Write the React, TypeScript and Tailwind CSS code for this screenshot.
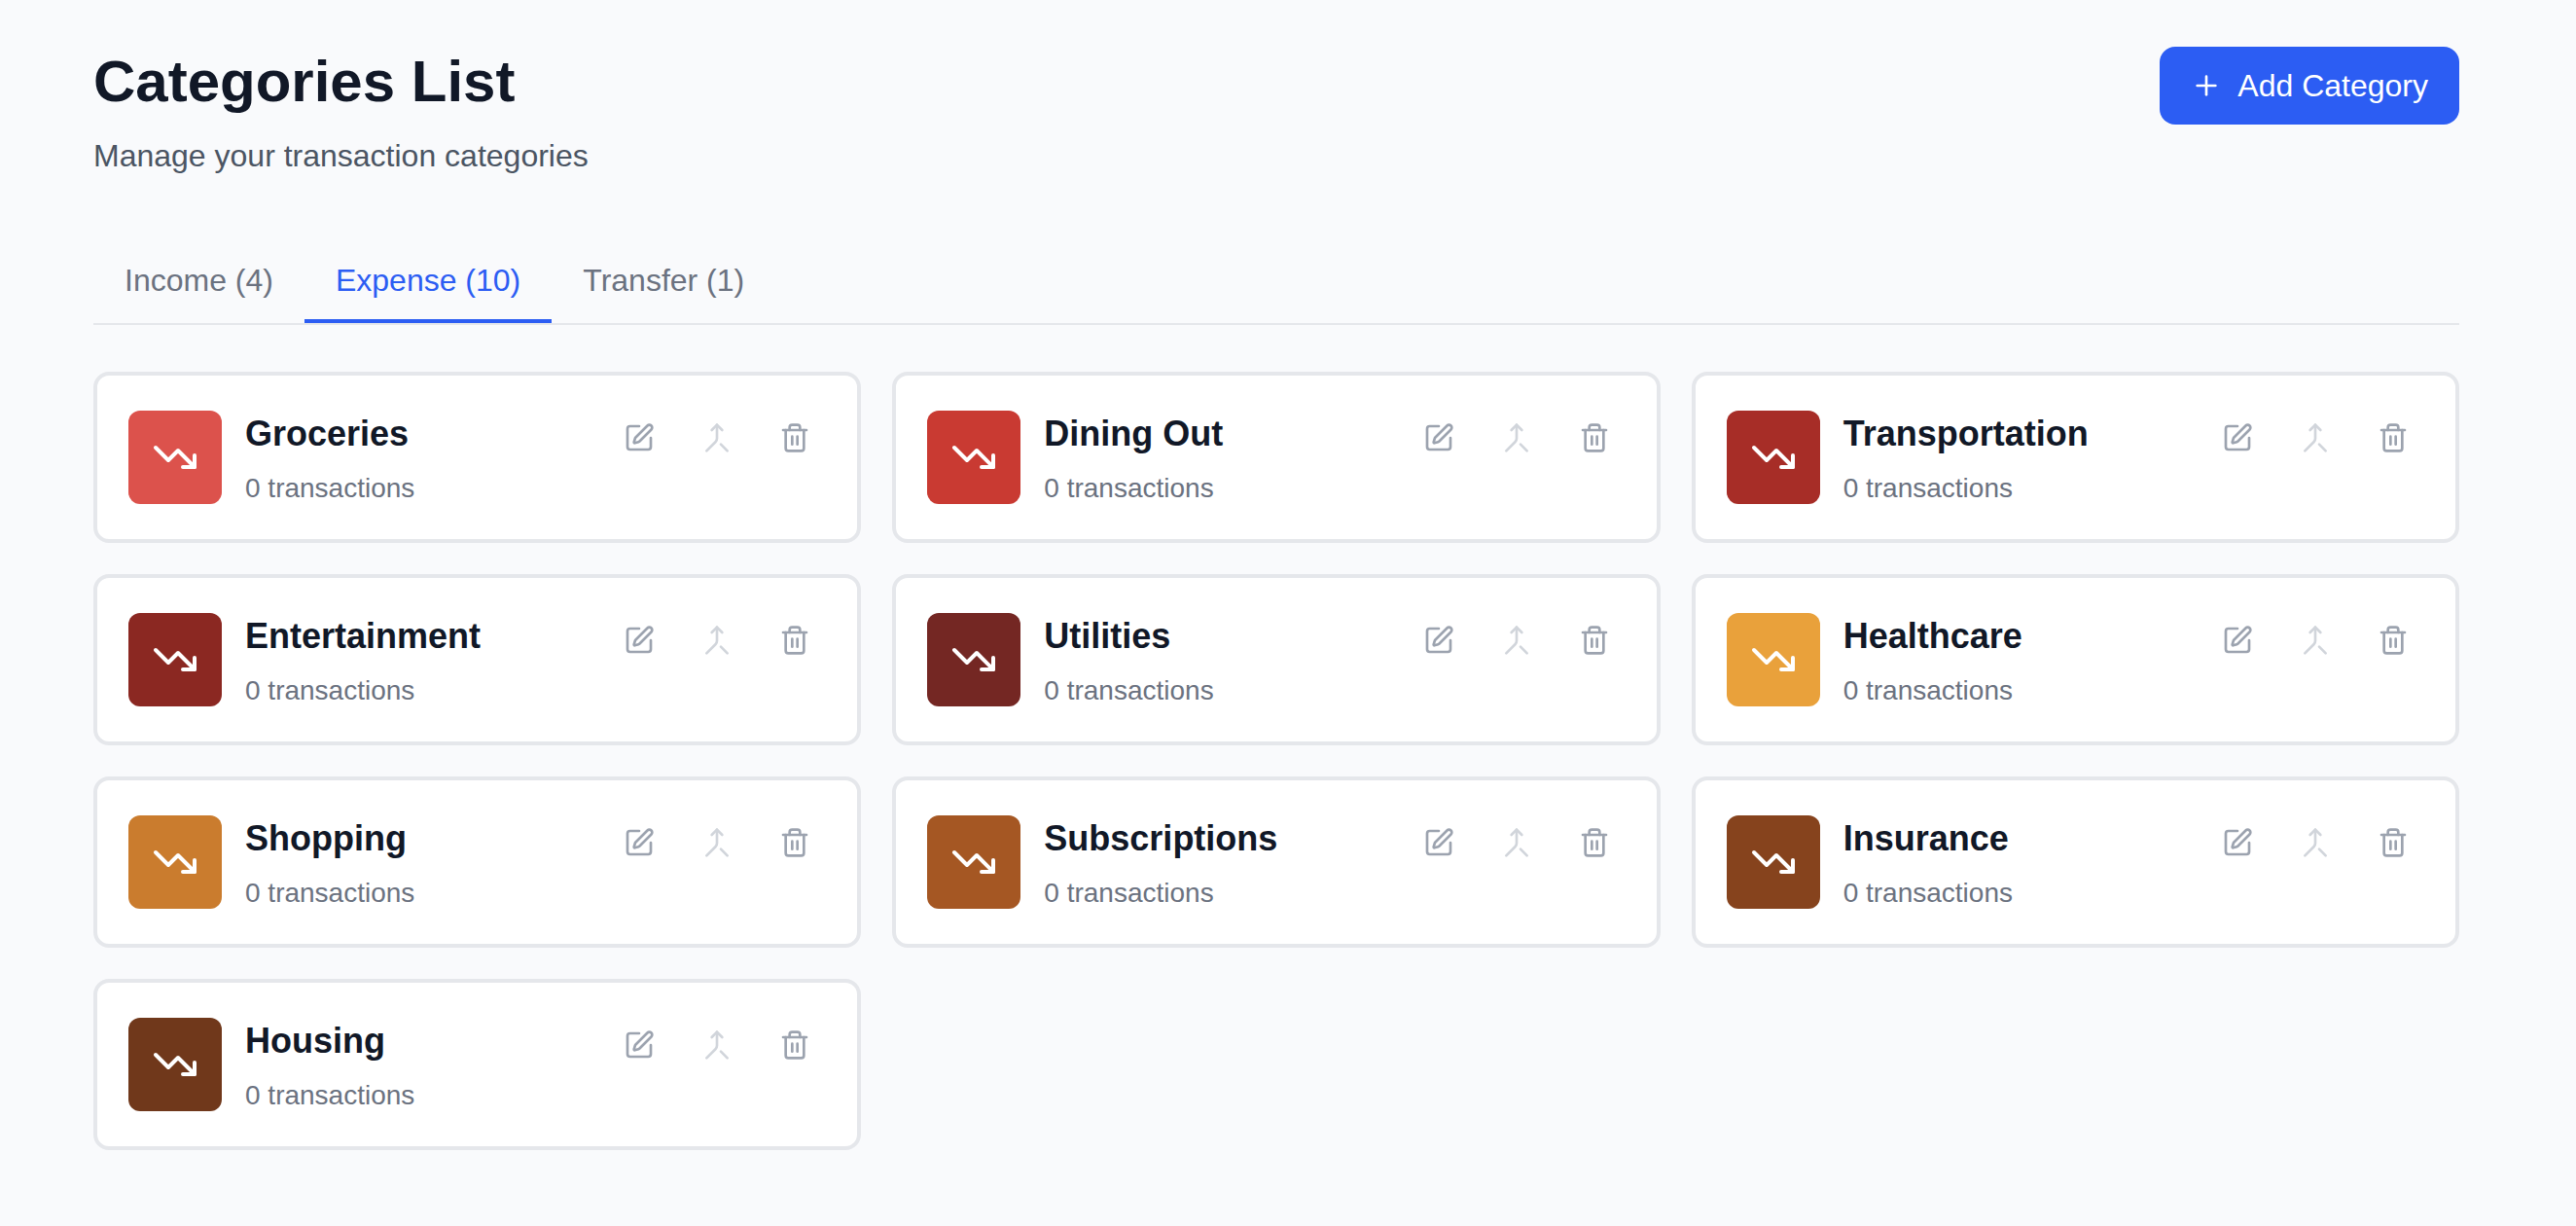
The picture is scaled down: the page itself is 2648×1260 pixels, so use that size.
import { useState } from "react";
import { Merge, Plus, SquarePen, Trash2, TrendingDown } from "lucide-react";

const categories = [
  { name: "Groceries", color: "bg-[#dc524c]" },
  { name: "Dining Out", color: "bg-[#c93a32]" },
  { name: "Transportation", color: "bg-[#a72d27]" },
  { name: "Entertainment", color: "bg-[#8b2822]" },
  { name: "Utilities", color: "bg-[#742723]" },
  { name: "Healthcare", color: "bg-[#e9a13b]" },
  { name: "Shopping", color: "bg-[#ca7c2e]" },
  { name: "Subscriptions", color: "bg-[#a55723]" },
  { name: "Insurance", color: "bg-[#86431d]" },
  { name: "Housing", color: "bg-[#70381b]" },
];

const tabs = ["Income (4)", "Expense (10)", "Transfer (1)"];

function CategoryCard({ name, color }: { name: string; color: string }) {
  return (
    <li className="flex items-start justify-between rounded-2xl border-4 border-[#e5e7eb] bg-white p-8">
      <div className="flex items-center gap-6">
        <div className={`flex size-24 items-center justify-center rounded-xl text-white ${color}`}>
          <TrendingDown className="size-12" />
        </div>
        <div>
          <h2 className="text-[36px] leading-[56px] font-bold text-[#111827]">{name}</h2>
          <p className="mt-2 text-[28px] leading-10 text-[#6b7280]">0 transactions</p>
        </div>
      </div>
      <div className="flex gap-4 text-[#9ca3af]">
        <button type="button" aria-label={`Edit ${name}`} className="p-4">
          <SquarePen className="size-8" />
        </button>
        <button type="button" disabled aria-label={`Merge ${name}`} className="p-4 text-[#d1d5db]">
          <Merge className="size-8" />
        </button>
        <button type="button" aria-label={`Delete ${name}`} className="p-4">
          <Trash2 className="size-8" />
        </button>
      </div>
    </li>
  );
}

export default function App() {
  const [active, setActive] = useState(1);

  return (
    <main className="min-h-screen bg-[#f9fafc] py-12 pr-[120px] pl-24 font-['Liberation_Sans',Arial,sans-serif]">
      <header className="flex items-start justify-between">
        <div>
          <h1 className="text-[60px] leading-[72px] font-bold text-[#111827]">Categories List</h1>
          <p className="mt-4 text-[32px] leading-[48px] text-[#4b5563]">Manage your transaction categories</p>
        </div>
        <button
          type="button"
          className="flex items-center gap-4 rounded-2xl bg-[#2c5df3] px-8 py-4 text-[32px] leading-[48px] text-white"
        >
          <Plus className="size-8" />
          Add Category
        </button>
      </header>

      <div role="tablist" className="mt-16 flex border-b-2 border-[#e5e7eb]">
        {tabs.map((label, i) => (
          <button
            key={label}
            type="button"
            role="tab"
            aria-selected={i === active}
            onClick={() => setActive(i)}
            className={`border-b-4 px-8 py-4 text-[32px] leading-[48px] ${
              i === active ? "border-[#2c5df3] text-[#2c5df3]" : "border-transparent text-[#6b7280]"
            }`}
          >
            {label}
          </button>
        ))}
      </div>

      <ul className="mt-12 grid grid-cols-3 gap-8">
        {categories.map((category) => (
          <CategoryCard key={category.name} {...category} />
        ))}
      </ul>
    </main>
  );
}
